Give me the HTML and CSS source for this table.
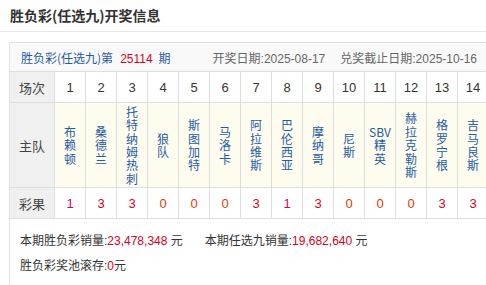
FILE: index.html
```html
<!DOCTYPE html>
<html lang="zh-CN">
<head>
<meta charset="utf-8">
<title>胜负彩(任选九)开奖信息</title>
<link rel="stylesheet" href="styles.css">
</head>
<body>
<div class="page">
  <h2 class="title">胜负彩(任选九)开奖信息</h2>
  <div class="box">
    <div class="head">
      <div class="issue">胜负彩(任选九)第<span class="num">25114</span>期</div>
      <div class="dates">
        <span>开奖日期:2025-08-17</span>
        <span class="cash">兑奖截止日期:2025-10-16</span>
      </div>
    </div>
    <div class="grid">
      <div class="cell label">场次</div>
      <div class="cell">1</div><div class="cell">2</div><div class="cell">3</div><div class="cell">4</div><div class="cell">5</div><div class="cell">6</div><div class="cell">7</div><div class="cell">8</div><div class="cell">9</div><div class="cell">10</div><div class="cell">11</div><div class="cell">12</div><div class="cell">13</div><div class="cell">14</div>

      <div class="cell label team-label">主队</div>
      <div class="cell team"><span class="name">布赖顿</span></div>
      <div class="cell team"><span class="name">桑德兰</span></div>
      <div class="cell team"><span class="name">托特纳姆热刺</span></div>
      <div class="cell team"><span class="name">狼队</span></div>
      <div class="cell team"><span class="name">斯图加特</span></div>
      <div class="cell team"><span class="name">马洛卡</span></div>
      <div class="cell team"><span class="name">阿拉维斯</span></div>
      <div class="cell team"><span class="name">巴伦西亚</span></div>
      <div class="cell team"><span class="name">摩纳哥</span></div>
      <div class="cell team"><span class="name">尼斯</span></div>
      <div class="cell team"><span class="name">SBV精英</span></div>
      <div class="cell team"><span class="name">赫拉克勒斯</span></div>
      <div class="cell team"><span class="name">格罗宁根</span></div>
      <div class="cell team"><span class="name">吉马良斯</span></div>

      <div class="cell label">彩果</div>
      <div class="cell res r1">1</div>
      <div class="cell res r3">3</div>
      <div class="cell res r3">3</div>
      <div class="cell res r0">0</div>
      <div class="cell res r0">0</div>
      <div class="cell res r0">0</div>
      <div class="cell res r3">3</div>
      <div class="cell res r1">1</div>
      <div class="cell res r3">3</div>
      <div class="cell res r0">0</div>
      <div class="cell res r0">0</div>
      <div class="cell res r0">0</div>
      <div class="cell res r3">3</div>
      <div class="cell res r3">3</div>
    </div>
    <div class="foot">
      <p class="line">本期胜负彩销量:<span class="red">23,478,348</span> 元<span class="sep">本期任选九销量:<span class="red">19,682,640</span> 元</span></p>
      <p class="line">胜负彩奖池滚存:<span class="red">0</span>元</p>
    </div>
  </div>
</div>
</body>
</html>
```

FILE: styles.css
```css
html, body {
  margin: 0;
  padding: 0;
  background: #fff;
  overflow: hidden;
}

body {
  font-family: "Liberation Sans", "Noto Sans CJK SC", sans-serif;
  font-size: 12px;
  color: #333;
}

.page {
  width: 486px;
  height: 285px;
  overflow: hidden;
}

.title {
  margin: 0;
  height: 31px;
  line-height: 31px;
  padding-left: 10px;
  font-size: 14px;
  font-weight: bold;
  color: #333;
  border-bottom: 1px solid #e6e6e6;
  font-family: "Noto Sans CJK SC", sans-serif;
}

.box {
  margin: 10px 0 0 9px;
  width: 490px;
  height: 243px;
  border: 1px solid #e2e2e2;
  border-bottom: none;
  box-sizing: border-box;
}

.head {
  display: flex;
  justify-content: space-between;
  align-items: center;
  height: 28px;
  padding: 0 21px 0 11px;
  background: #f9f9f9;
  border-bottom: 1px solid #dedede;
}

.issue {
  color: #1f5ba6;
  font-family: "Noto Sans CJK SC", sans-serif;
}

.issue .num {
  color: #d8001c;
  font-family: "Liberation Sans", sans-serif;
  margin: 0 6px 0 7px;
}

.dates {
  color: #666;
  display: flex;
  gap: 15px;
}

.grid {
  display: grid;
  grid-template-columns: 45px repeat(14, 31px);
  grid-template-rows: 31px 85px 31px;
}

.cell {
  display: flex;
  align-items: center;
  justify-content: center;
  border-right: 1px solid #dedede;
  border-bottom: 1px solid #dedede;
  box-sizing: border-box;
  color: #333;
  font-size: 13px;
}

.label {
  background: #f0f0f0;
  color: #444;
  font-size: 13px;
  font-family: "Noto Sans CJK SC", sans-serif;
}

.team {
  background: #fdfcee;
}

.team-label {
  background: #f0f0f0;
}

.name {
  display: block;
  width: 22px;
  text-align: center;
  color: #1f5ba6;
  font-size: 12px;
  line-height: 13.4px;
  font-family: "Noto Sans CJK SC", sans-serif;
  word-break: normal;
}

.res {
  font-size: 13px;
}

.r1 { color: #d3006a; }
.r3 { color: #e0001c; }
.r0 { color: #e03a00; }

.foot {
  padding: 10px 0 0 10px;
}

.line {
  margin: 0;
  line-height: 25px;
  color: #333;
}

.red {
  color: #d8001c;
}

.sep {
  margin-left: 22px;
}
```
